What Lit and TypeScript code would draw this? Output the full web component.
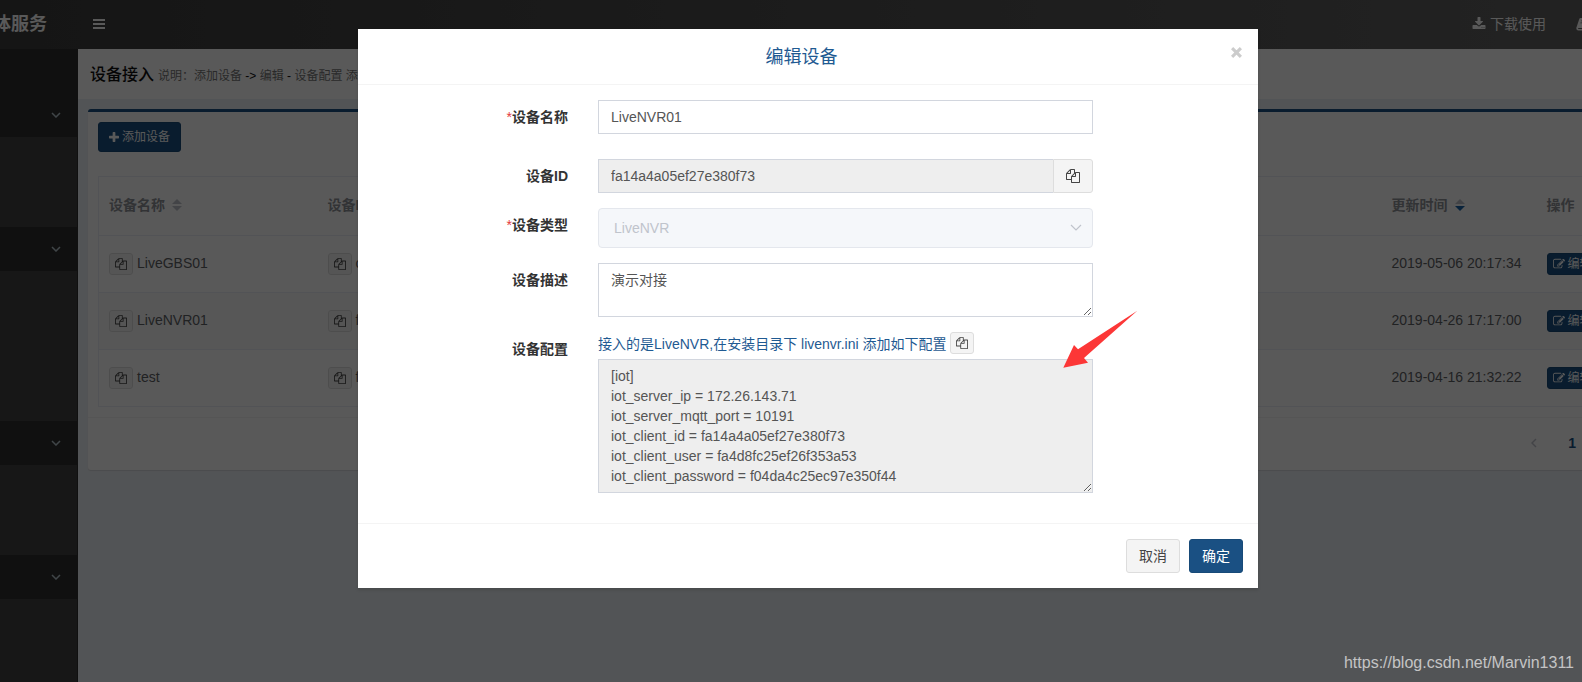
import { LitElement, html, css, svg } from "lit";
import { customElement, property } from "lit/decorators.js";

const ICONS: Record<string, { box: string; body: unknown }> = {
  copy: {
    box: "0 0 1792 1792",
    body: svg`<path d="M1696 384q40 0 68 28t28 68v1216q0 40-28 68t-68 28h-960q-40 0-68-28t-28-68v-288h-544q-40 0-68-28t-28-68v-672q0-40 20-88t48-76l408-408q28-28 76-48t88-20h416q40 0 68 28t28 68v328q68-40 128-40h416zm-544 213l-299 299h299v-299zm-640-384l-299 299h299v-299zm196 647l316-316v-416h-384v416q0 40-28 68t-68 28h-416v640h512v-256q0-40 20-88t48-76zm956 804v-1152h-384v416q0 40-28 68t-68 28h-416v640h896z"/>`,
  },
  plus: {
    box: "192 0 1408 1792",
    body: svg`<path d="M1600 736v192q0 40-28 68t-68 28h-416v416q0 40-28 68t-68 28h-192q-40 0-68-28t-28-68v-416h-416q-40 0-68-28t-28-68v-192q0-40 28-68t68-28h416v-416q0-40 28-68t68-28h192q40 0 68 28t28 68v416h416q40 0 68 28t28 68z"/>`,
  },
  download: {
    box: "0 0 1792 1792",
    body: svg`<path d="M1344 1344q0-26-19-45t-45-19-45 19-19 45 19 45 45 19 45-19 19-45zm256 0q0-26-19-45t-45-19-45 19-19 45 19 45 45 19 45-19 19-45zm128-224v320q0 40-28 68t-68 28h-1472q-40 0-68-28t-28-68v-320q0-40 28-68t68-28h465l135 136q58 56 136 56t136-56l136-136h464q40 0 68 28t28 68zm-325-569q17 41-14 70l-448 448q-18 19-45 19t-45-19l-448-448q-31-29-14-70 17-39 59-39h256v-448q0-26 19-45t45-19h256q26 0 45 19t19 45v448h256q42 0 59 39z"/>`,
  },
  edit: {
    box: "0 0 1792 1792",
    body: svg`<path d="M888 1184l116-116-152-152-116 116v56h96v96h56zm440-720q-16-16-33 1l-350 350q-17 17-1 33t33-1l350-350q17-17 1-33zm80 594v190q0 119-84.5 203.5t-203.5 84.5h-832q-119 0-203.5-84.5t-84.5-203.5v-832q0-119 84.5-203.5t203.5-84.5h832q63 0 117 25 15 7 18 23 3 17-9 29l-49 49q-14 14-32 8-23-6-45-6h-832q-66 0-113 47t-47 113v832q0 66 47 113t113 47h832q66 0 113-47t47-113v-126q0-13 9-22l64-64q15-15 35-7t20 29zm-96-738l288 288-672 672h-288v-288zm444 132l-92 92-288-288 92-92q28-28 68-28t68 28l152 152q28 28 28 68t-28 68z"/>`,
  },
  book: {
    box: "0 0 14 14",
    body: svg`<path fill-rule="evenodd" d="M4.6 1h7.6q1.4.2 1 1.600l-2.200 7.400q-.3 1-1.300 1H2.600q-.7 0-.6.6.1.5.8.5h7.800l2.600-8.100q.8.500.5 1.400l-2.400 7.100q-.4.900-1.300.9H2.400Q.4 13.400.3 11.400q0-.9.400-1.700L3.200 2.200Q3.600 1 4.600 1zM5.300 3.400 5 4.300h5l.3-.9zM4.600 5.400l-.3.900h5l.3-.9z"/>`,
  },
  bars: { box: "0 0 12 12", body: svg`<path d="M0 1h12v2H0zM0 5h12v2H0zM0 9h12v2H0z"/>` },
  down: {
    box: "0 0 10 6",
    body: svg`<path d="M1 1l4 4 4-4" fill="none" stroke="currentColor" stroke-width="1.500"/>`,
  },
  "down-thin": {
    box: "0 0 12 8",
    body: svg`<path d="M1 1l5 5 5-5" fill="none" stroke="currentColor" stroke-width="1.200"/>`,
  },
  prev: {
    box: "0 0 6 10",
    body: svg`<path d="M5 1L1 5l4 4" fill="none" stroke="currentColor" stroke-width="1.500"/>`,
  },
  close: {
    box: "0 0 10 10",
    body: svg`<path d="M1 1l8 8M9 1L1 9" fill="none" stroke="currentColor" stroke-width="2.800"/>`,
  },
};

@customElement("ui-icon")
export class UiIcon extends LitElement {
  @property() name = "";
  static styles = css`
    :host { display: inline-block; width: 1em; height: 1em; flex: none; }
    svg { display: block; width: 100%; height: 100%; fill: currentColor; }
  `;
  render() {
    const icon = ICONS[this.name];
    return html`<svg viewBox=${icon.box} aria-hidden="true">${icon.body}</svg>`;
  }
}

const SECTIONS = ["short", "tall", "short", "rest"];

const DEVICES = [
  { name: "LiveGBS01", id: "c", updated: "2019-05-06 20:17:34" },
  { name: "LiveNVR01", id: "f", updated: "2019-04-26 17:17:00" },
  { name: "test", id: "f", updated: "2019-04-16 21:32:22" },
];

const CONFIG = [
  "[iot]",
  "iot_server_ip = 172.26.143.71",
  "iot_server_mqtt_port = 10191",
  "iot_client_id = fa14a4a05ef27e380f73",
  "iot_client_user = fa4d8fc25ef26f353a53",
  "iot_client_password = f04da4c25ec97e350f44",
].join("\n");

@customElement("app-root")
export class AppRoot extends LitElement {
  static styles = css`
    * { box-sizing: border-box; }
    :host {
      --blue: #1a5083;
      display: block;
      position: relative;
      height: 100vh;
      overflow: hidden;
      background: #ecf0f5;
      color: #333;
      font: 14px/20px "Liberation Sans", "Noto Sans CJK SC", sans-serif;
    }
    button, input, select, textarea { font: inherit; margin: 0; }

    .page { display: flex; flex-direction: column; height: 100%; }
    .topbar {
      display: flex;
      align-items: center;
      height: 49px;
      flex: none;
      padding-bottom: 1px;
      color: #fff;
      background: linear-gradient(90deg, #3d3d3d, #636363);
    }
    .logo {
      display: flex;
      justify-content: flex-end;
      width: 47px;
      font-size: 18px;
      font-weight: bold;
      white-space: nowrap;
    }
    .menu-toggle {
      display: flex;
      margin-left: 46px;
      padding: 0;
      border: 0;
      background: none;
      color: inherit;
    }
    .menu-toggle ui-icon { width: 12px; height: 12px; }
    .top-links {
      display: flex;
      gap: 30px;
      margin-left: auto;
      margin-right: -8px;
    }
    .top-link { display: flex; align-items: center; gap: 4px; color: inherit; text-decoration: none; }

    .columns { display: flex; flex: 1; min-height: 0; }
    .sidebar {
      display: flex;
      flex-direction: column;
      width: 78px;
      flex: none;
      padding-top: 44px;
      background: #303030;
    }
    .section {
      display: flex;
      align-items: center;
      justify-content: flex-end;
      height: 44px;
      flex: none;
      padding: 0 17px 0 0;
      border: 0;
      background: none;
      color: #b8c7ce;
    }
    .section ui-icon { width: 10px; height: 6px; }
    .submenu { flex: none; margin-right: 1px; background: #444; }
    .short { height: 90px; }
    .tall { height: 150px; }
    .rest { flex: 1; }

    .main { flex: 1; min-width: 0; overflow: hidden; }
    .main-inner { width: calc(100% + 160px); }
    .content-head {
      display: flex;
      align-items: baseline;
      gap: 4px;
      height: 50px;
      padding: 16px 12px 0;
      background: #fff;
      white-space: nowrap;
    }
    .content-title { margin: 0; font-size: 16px; font-weight: 500; color: #111; }
    .content-note { font-size: 12px; color: #777; }
    .arrow-text { color: #111; }
    .box {
      margin: 10px;
      border-top: 3px solid var(--blue);
      border-radius: 3px;
      background: #fff;
      box-shadow: 0 1px 1px rgba(0, 0, 0, 0.1);
    }
    .box-body { padding: 10px; }
    .add {
      display: flex;
      align-items: center;
      gap: 3px;
      height: 30px;
      margin-bottom: 24px;
      padding: 0 10px;
      border: 1px solid #174a78;
      border-radius: 3px;
      background: var(--blue);
      color: #fff;
      font-size: 12px;
    }
    .add ui-icon { width: 10px; height: 13px; }

    .devices {
      width: 100%;
      table-layout: fixed;
      border-collapse: collapse;
      border: 1px solid #ebeef5;
      color: #606266;
    }
    .col-name { width: 219px; }
    .col-time { width: 155px; }
    .col-ops { width: 185px; }
    .devices th { height: 59px; padding: 0 10px 2px; text-align: left; color: #909399; }
    .devices td { height: 57px; padding: 0 10px; border-top: 1px solid #ebeef5; white-space: nowrap; }
    .devices tbody tr:nth-child(even) { background: #fafafa; }
    .cell { display: flex; align-items: flex-start; gap: 4px; height: 22px; }
    .heading { display: flex; align-items: center; gap: 7px; }
    .sort { display: grid; gap: 2px; color: #c0c4cc; }
    .caret-up { border: 5px solid transparent; border-top: 0; border-bottom-color: currentColor; }
    .caret-down { border: 5px solid transparent; border-bottom: 0; border-top-color: currentColor; }
    .sorted { border-top-color: #1c66a8; }

    .mini {
      display: inline-flex;
      align-items: center;
      justify-content: center;
      gap: 3px;
      width: 24px;
      height: 22px;
      padding: 0 5px;
      border: 1px solid #ddd;
      border-radius: 3px;
      background: #f4f4f4;
      color: #444;
      font-size: 12px;
    }
    .mini-blue { width: auto; border-color: #174a78; background: var(--blue); color: #fff; }

    .pager {
      display: flex;
      align-items: center;
      justify-content: flex-end;
      gap: 31px;
      height: 53px;
      padding: 0 156px 2px 0;
      border-top: 1px solid #f4f4f4;
      color: var(--blue);
      font-weight: bold;
    }
    .pager button { display: flex; padding: 0; border: 0; background: none; color: #c0c4cc; }
    .pager ui-icon { width: 6px; height: 10px; }

    .backdrop {
      position: absolute;
      inset: 0;
      display: flex;
      justify-content: center;
      align-items: flex-start;
      padding: 29px 0 0 34px;
      background: rgba(0, 0, 0, 0.65);
    }
    .modal {
      position: relative;
      width: 900px;
      max-width: 100%;
      background: #fff;
      box-shadow: 0 2px 3px rgba(0, 0, 0, 0.125);
    }
    .modal-head {
      display: flex;
      align-items: flex-start;
      padding: 16px 15px 14px;
      border-bottom: 1px solid #f4f4f4;
    }
    .modal-title {
      flex: 1;
      margin: 0;
      font-size: 18px;
      line-height: 25px;
      font-weight: 400;
      text-align: center;
      color: #1f5a92;
    }
    .close {
      display: flex;
      padding: 2px 1px;
      border: 0;
      background: none;
      color: #ccc;
    }
    .close ui-icon { width: 11px; height: 11px; }
    .form { display: grid; gap: 15px; padding: 15px 0 30px; }
    .field { display: grid; grid-template-columns: 3fr 7fr 2fr; align-items: start; }
    .field-spaced { margin-bottom: 10px; }
    .label { padding: 7px 15px 0; text-align: right; font-weight: bold; }
    .star { color: #e4393c; font-weight: 400; }
    .control { display: flex; flex-wrap: wrap; padding: 0 15px; }
    .input {
      display: block;
      flex: 1;
      width: 100%;
      min-width: 0;
      height: 34px;
      padding: 6px 12px;
      border: 1px solid #d2d6de;
      border-radius: 0;
      background: #fff;
      color: #555;
      outline: 0;
    }
    .input[readonly] { background: #eee; }
    textarea.input { height: auto; flex: 1 0 100%; resize: vertical; overflow: hidden; }
    .input-joined { border-right: 0; }
    .addon {
      display: flex;
      align-items: center;
      justify-content: center;
      width: 40px;
      padding: 0;
      border: 1px solid #ddd;
      border-radius: 0 3px 3px 0;
      background: #f4f4f4;
      color: #444;
    }
    .select-wrap { position: relative; flex: 1; }
    .select {
      display: block;
      appearance: none;
      width: 100%;
      height: 40px;
      padding: 0 15px;
      border: 1px solid #e4e7ed;
      border-radius: 4px;
      background: #f5f7fa;
      color: #c0c4cc;
      opacity: 1;
    }
    .select-wrap ui-icon {
      position: absolute;
      right: 11px;
      top: 16px;
      width: 12px;
      height: 8px;
      color: #c0c4cc;
    }
    .hint { display: flex; align-items: flex-end; gap: 3px; width: 100%; padding-bottom: 5px; }
    .hint-link { color: #1f5a92; text-decoration: none; }
    .modal-foot {
      display: flex;
      justify-content: flex-end;
      gap: 9px;
      padding: 15px;
      border-top: 1px solid #f4f4f4;
    }
    .btn {
      height: 34px;
      padding: 0 12px;
      border: 1px solid #ddd;
      border-radius: 3px;
      background: #f4f4f4;
      color: #444;
    }
    .btn-primary { border-color: #174a78; background: var(--blue); color: #fff; }

    .pointer { position: absolute; left: 705px; top: 281px; width: 75px; height: 58px; fill: #fc3737; }
    .watermark {
      position: absolute;
      right: 8px;
      bottom: 9px;
      font-size: 16px;
      color: #c4c4c5;
    }
  `;

  private copyButton(label: string) {
    return html`<button class="mini" type="button" aria-label=${label}><ui-icon name="copy"></ui-icon></button>`;
  }

  private sorter(active = false) {
    return html`<span class="sort"><span class="caret-up"></span><span class="caret-down ${active ? "sorted" : ""}"></span></span>`;
  }

  render() {
    return html`
      <div class="page">
        <header class="topbar">
          <div class="logo">体服务</div>
          <button class="menu-toggle" type="button" aria-label="菜单"><ui-icon name="bars"></ui-icon></button>
          <nav class="top-links">
            <a class="top-link" href="#"><ui-icon name="download"></ui-icon>下载使用</a>
            <a class="top-link" href="#" aria-label="文档"><ui-icon name="book"></ui-icon></a>
          </nav>
        </header>
        <div class="columns">
          <nav class="sidebar">
            ${SECTIONS.map(
              (size) => html`
                <button class="section" type="button" aria-label="展开"><ui-icon name="down"></ui-icon></button>
                <div class="submenu ${size}"></div>
              `,
            )}
          </nav>
          <main class="main">
            <div class="main-inner">
              <div class="content-head">
                <h1 class="content-title">设备接入</h1>
                <span class="content-note">说明：添加设备 <span class="arrow-text">-&gt;</span> 编辑 <span class="arrow-text">-</span> 设备配置 添</span>
              </div>
              <section class="box">
                <div class="box-body">
                  <button class="add" type="button"><ui-icon name="plus"></ui-icon>添加设备</button>
                  <table class="devices">
                    <colgroup>
                      <col class="col-name" /><col /><col class="col-time" /><col class="col-ops" />
                    </colgroup>
                    <thead>
                      <tr>
                        <th><span class="heading">设备名称${this.sorter()}</span></th>
                        <th>设备ID</th>
                        <th><span class="heading">更新时间${this.sorter(true)}</span></th>
                        <th>操作</th>
                      </tr>
                    </thead>
                    <tbody>
                      ${DEVICES.map(
                        (d) => html`<tr>
                          <td><span class="cell">${this.copyButton("复制名称")}${d.name}</span></td>
                          <td><span class="cell">${this.copyButton("复制ID")}${d.id}</span></td>
                          <td><span class="cell">${d.updated}</span></td>
                          <td><span class="cell"><button class="mini mini-blue" type="button"><ui-icon name="edit"></ui-icon>编辑</button></span></td>
                        </tr>`,
                      )}
                    </tbody>
                  </table>
                </div>
                <div class="pager">
                  <button type="button" aria-label="上一页"><ui-icon name="prev"></ui-icon></button>
                  <span>1</span>
                </div>
              </section>
            </div>
          </main>
        </div>
      </div>

      <div class="backdrop">
        <div class="modal" role="dialog" aria-labelledby="modal-title">
          <div class="modal-head">
            <h2 class="modal-title" id="modal-title">编辑设备</h2>
            <button class="close" type="button" aria-label="关闭"><ui-icon name="close"></ui-icon></button>
          </div>
          <form class="form">
            <div class="field field-spaced">
              <label class="label" for="name"><span class="star">*</span>设备名称</label>
              <div class="control"><input class="input" id="name" type="text" .value=${"LiveNVR01"} /></div>
            </div>
            <div class="field">
              <label class="label" for="device-id">设备ID</label>
              <div class="control">
                <input class="input input-joined" id="device-id" type="text" readonly .value=${"fa14a4a05ef27e380f73"} />
                <button class="addon" type="button" aria-label="复制"><ui-icon name="copy"></ui-icon></button>
              </div>
            </div>
            <div class="field">
              <label class="label" for="kind"><span class="star">*</span>设备类型</label>
              <div class="control">
                <div class="select-wrap">
                  <select class="select" id="kind" disabled><option>LiveNVR</option></select>
                  <ui-icon name="down-thin"></ui-icon>
                </div>
              </div>
            </div>
            <div class="field">
              <label class="label" for="desc">设备描述</label>
              <div class="control"><textarea class="input" id="desc" rows="2" .value=${"演示对接"}></textarea></div>
            </div>
            <div class="field">
              <label class="label" for="config">设备配置</label>
              <div class="control">
                <div class="hint">
                  <a class="hint-link" href="#">接入的是LiveNVR,在安装目录下 livenvr.ini 添加如下配置</a>
                  ${this.copyButton("复制配置")}
                </div>
                <textarea class="input" id="config" rows="6" readonly .value=${CONFIG}></textarea>
              </div>
            </div>
          </form>
          <div class="modal-foot">
            <button class="btn" type="button">取消</button>
            <button class="btn btn-primary" type="button">确定</button>
          </div>
          <svg class="pointer" viewBox="0 0 75 58" aria-hidden="true">
            <path d="M0.300 57.700L11 35l4 4.300L74.300 0.700 21 48l4 4.700z" />
          </svg>
        </div>
      </div>
      <div class="watermark">https://blog.csdn.net/Marvin1311</div>
    `;
  }
}
